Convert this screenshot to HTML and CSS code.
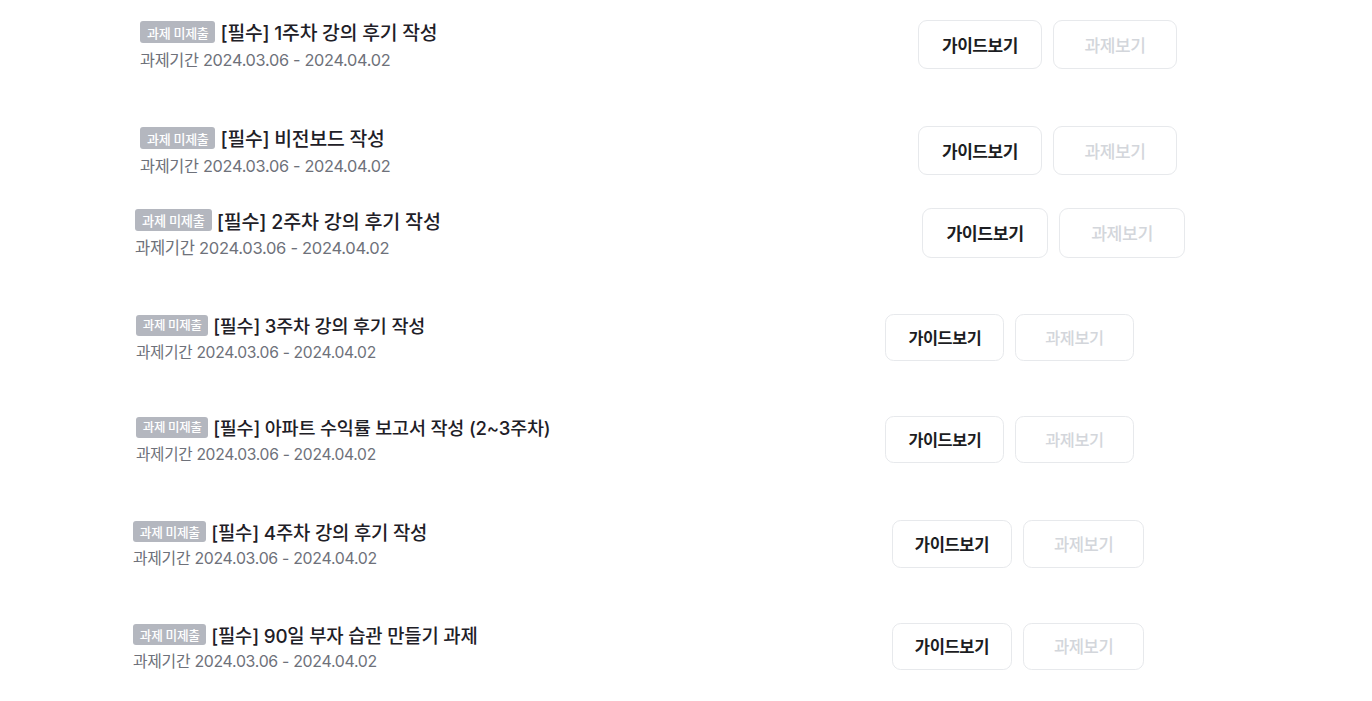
FILE: index.html
```html
<!DOCTYPE html>
<html lang="ko">
<head>
<meta charset="utf-8">
<title>과제 목록</title>
<link rel="stylesheet" href="styles.css">
</head>
<body>
<main class="list">
  <section class="row row-a mb-57">
    <div class="info">
      <div class="head"><span class="badge">과제 미제출</span><span class="title">[필수] 1주차 강의 후기 작성</span></div>
      <div class="period">과제기간 2024.03.06 - 2024.04.02</div>
    </div>
    <div class="actions"><button class="btn">가이드보기</button><button class="btn btn-off">과제보기</button></div>
  </section>
  <section class="row row-a mb-33">
    <div class="info">
      <div class="head"><span class="badge">과제 미제출</span><span class="title">[필수] 비전보드 작성</span></div>
      <div class="period">과제기간 2024.03.06 - 2024.04.02</div>
    </div>
    <div class="actions"><button class="btn">가이드보기</button><button class="btn btn-off">과제보기</button></div>
  </section>
  <section class="row row-b mb-56">
    <div class="info">
      <div class="head"><span class="badge">과제 미제출</span><span class="title">[필수] 2주차 강의 후기 작성</span></div>
      <div class="period">과제기간 2024.03.06 - 2024.04.02</div>
    </div>
    <div class="actions"><button class="btn">가이드보기</button><button class="btn btn-off">과제보기</button></div>
  </section>
  <section class="row row-c mb-55">
    <div class="info">
      <div class="head"><span class="badge">과제 미제출</span><span class="title">[필수] 3주차 강의 후기 작성</span></div>
      <div class="period">과제기간 2024.03.06 - 2024.04.02</div>
    </div>
    <div class="actions"><button class="btn">가이드보기</button><button class="btn btn-off">과제보기</button></div>
  </section>
  <section class="row row-c mb-57">
    <div class="info">
      <div class="head"><span class="badge">과제 미제출</span><span class="title">[필수] 아파트 수익률 보고서 작성 (2~3주차)</span></div>
      <div class="period">과제기간 2024.03.06 - 2024.04.02</div>
    </div>
    <div class="actions"><button class="btn">가이드보기</button><button class="btn btn-off">과제보기</button></div>
  </section>
  <section class="row row-d mb-55">
    <div class="info">
      <div class="head"><span class="badge">과제 미제출</span><span class="title">[필수] 4주차 강의 후기 작성</span></div>
      <div class="period">과제기간 2024.03.06 - 2024.04.02</div>
    </div>
    <div class="actions"><button class="btn">가이드보기</button><button class="btn btn-off">과제보기</button></div>
  </section>
  <section class="row row-d">
    <div class="info">
      <div class="head"><span class="badge">과제 미제출</span><span class="title">[필수] 90일 부자 습관 만들기 과제</span></div>
      <div class="period">과제기간 2024.03.06 - 2024.04.02</div>
    </div>
    <div class="actions"><button class="btn">가이드보기</button><button class="btn btn-off">과제보기</button></div>
  </section>
</main>
</body>
</html>
```

FILE: styles.css
```css
* { box-sizing: border-box; }
html, body { margin: 0; padding: 0; background: #ffffff; }
body {
  font-family: Inter, "Noto Sans CJK KR", sans-serif;
  color: #1e2027;
}
.list {
  display: flex;
  flex-direction: column;
  padding-top: 20px;
}
.row {
  --s: 1;
  display: flex;
  align-items: flex-start;
  justify-content: space-between;
}
.row-a { --s: 1; margin-left: 140px; width: 1037px; }
.row-b { --s: 1.015; margin-left: 135px; width: 1050px; }
.row-c { --s: 0.96; margin-left: 136px; width: 998px; }
.row-d { --s: 0.975; margin-left: 133px; width: 1011px; }
.mb-57 { margin-bottom: 57px; }
.mb-56 { margin-bottom: 56px; }
.mb-55 { margin-bottom: 55px; }
.mb-33 { margin-bottom: 33px; }

.info {
  display: flex;
  flex-direction: column;
  height: calc(49px * var(--s));
  overflow: visible;
}
.head {
  display: flex;
  align-items: center;
  gap: calc(5px * var(--s));
  height: calc(24px * var(--s));
  flex: none;
}
.badge {
  display: inline-flex;
  align-items: center;
  height: calc(22px * var(--s));
  padding: 0 calc(7px * var(--s));
  border-radius: 3px;
  background: #b4b7bf;
  color: #ffffff;
  font-size: calc(13px * var(--s));
  font-weight: 500;
  letter-spacing: -0.3px;
}
.title {
  font-size: calc(19.3px * var(--s));
  font-weight: 500;
  color: #1e2027;
  letter-spacing: -0.2px;
}
.period {
  flex: none;
  margin-top: calc(4px * var(--s));
  height: calc(24px * var(--s));
  line-height: calc(24px * var(--s));
  font-size: calc(16.3px * var(--s));
  color: #6e717a;
  letter-spacing: -0.3px;
}
.actions { display: flex; gap: calc(11px * var(--s)); }
.btn {
  width: calc(124px * var(--s));
  height: calc(49px * var(--s));
  border: 1px solid #e7e9ec;
  border-radius: calc(9px * var(--s));
  background: #ffffff;
  font-family: Inter, "Noto Sans CJK KR", sans-serif;
  font-size: calc(17px * var(--s));
  font-weight: 700;
  color: #1c1d22;
  padding: 0;
  letter-spacing: -0.4px;
}
.btn-off {
  color: #d3d6db;
  font-weight: 500;
}
```
